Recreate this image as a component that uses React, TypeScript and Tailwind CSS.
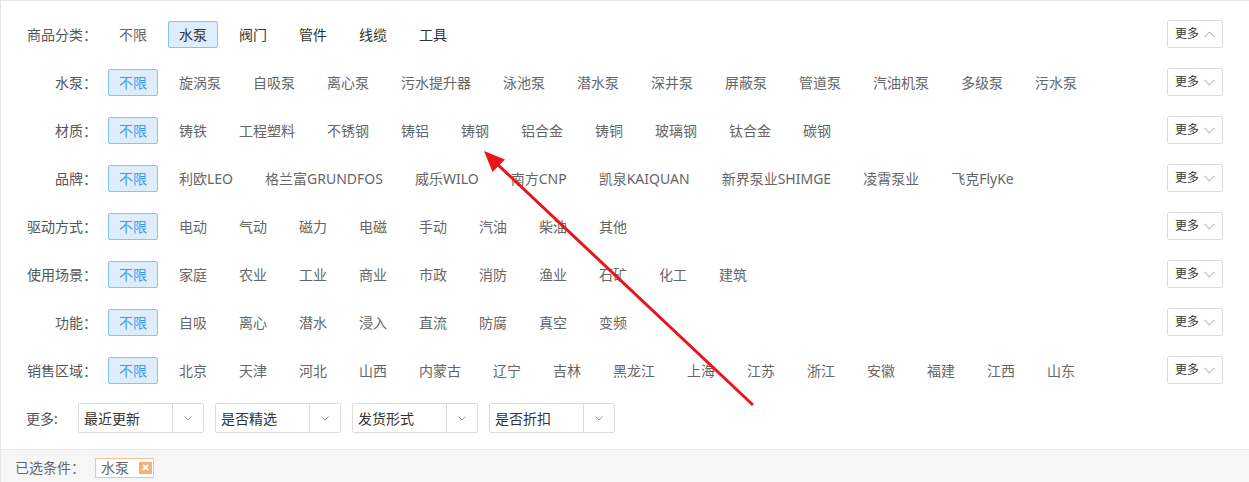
import React from 'react';

interface FilterRow {
  label: string;
  options: string[];
  selected: string;
  dark?: boolean;
  open?: boolean;
}

const rows: FilterRow[] = [
  { label: '商品分类：', options: ['不限', '水泵', '阀门', '管件', '线缆', '工具'], selected: '水泵', dark: true, open: true },
  {
    label: '水泵：',
    options: ['不限', '旋涡泵', '自吸泵', '离心泵', '污水提升器', '泳池泵', '潜水泵', '深井泵', '屏蔽泵', '管道泵', '汽油机泵', '多级泵', '污水泵'],
    selected: '不限',
  },
  {
    label: '材质：',
    options: ['不限', '铸铁', '工程塑料', '不锈钢', '铸铝', '铸钢', '铝合金', '铸铜', '玻璃钢', '钛合金', '碳钢'],
    selected: '不限',
  },
  {
    label: '品牌：',
    options: ['不限', '利欧LEO', '格兰富GRUNDFOS', '威乐WILO', '南方CNP', '凯泉KAIQUAN', '新界泵业SHIMGE', '凌霄泵业', '飞克FlyKe'],
    selected: '不限',
  },
  {
    label: '驱动方式：',
    options: ['不限', '电动', '气动', '磁力', '电磁', '手动', '汽油', '柴油', '其他'],
    selected: '不限',
  },
  {
    label: '使用场景：',
    options: ['不限', '家庭', '农业', '工业', '商业', '市政', '消防', '渔业', '石矿', '化工', '建筑'],
    selected: '不限',
  },
  {
    label: '功能：',
    options: ['不限', '自吸', '离心', '潜水', '浸入', '直流', '防腐', '真空', '变频'],
    selected: '不限',
  },
  {
    label: '销售区域：',
    options: ['不限', '北京', '天津', '河北', '山西', '内蒙古', '辽宁', '吉林', '黑龙江', '上海', '江苏', '浙江', '安徽', '福建', '江西', '山东'],
    selected: '不限',
  },
];

const selects = ['最近更新', '是否精选', '发货形式', '是否折扣'];

const font = { fontFamily: '"Noto Sans", "Noto Sans CJK SC", sans-serif' };

function Chevron({ up }: { up?: boolean }) {
  return (
    <svg width="11" height="7" viewBox="0 0 11 7" className="text-[#999]">
      <path
        d={up ? 'M0.5 6 L5.5 1 L10.5 6' : 'M0.5 1 L5.5 6 L10.5 1'}
        fill="none"
        stroke="currentColor"
        strokeWidth="1"
      />
    </svg>
  );
}

function SmallChevron() {
  return (
    <svg width="8" height="5" viewBox="0 0 8 5" className="text-[#999]">
      <path d="M0.5 0.5 L4 4 L7.5 0.5" fill="none" stroke="currentColor" strokeWidth="1" />
    </svg>
  );
}

export default function App() {
  return (
    <div className="relative w-[1249px] h-[482px] overflow-hidden bg-white" style={font}>
      <div className="border-t border-l border-[#e6e6e6] pt-[9px]">
        {/* Filter rows */}
        {rows.map((row) => (
          <div key={row.label} className="flex items-center h-[48px]">
            <span className="w-[96px] text-right text-[14px] text-[#555] whitespace-nowrap">{row.label}</span>
            <div className="flex-1 flex items-center gap-[10px] ml-[11px]">
              {row.options.map((opt) => {
                const active = opt === row.selected;
                return (
                  <span
                    key={opt}
                    className={`px-[10px] h-[27px] flex items-center text-[14px] rounded-[2px] border whitespace-nowrap ${
                      active
                        ? `bg-[#ddedfa] border-[#86c3f2] ${row.dark ? 'text-[#333]' : 'text-[#3a9cf0]'}`
                        : `border-transparent ${row.dark && opt !== '不限' ? 'text-[#333]' : 'text-[#666]'}`
                    }`}
                  >
                    {opt}
                  </span>
                );
              })}
            </div>
            <button className="mr-[26px] w-[56px] h-[28px] flex items-center justify-center gap-[5px] border border-[#dcdcdc] rounded-[2px] bg-white text-[12px] text-[#333]">
              更多
              <Chevron up={row.open} />
            </button>
          </div>
        ))}

        {/* More selects */}
        <div className="flex items-center h-[48px] pl-[25px]">
          <span className="w-[52px] text-[14px] text-[#555]">更多:</span>
          <div className="flex items-center gap-[11px]">
            {selects.map((s) => (
              <div key={s} className="flex w-[126px] h-[30px] border border-[#dcdcdc] rounded-[2px] bg-white">
                <span className="flex-1 flex items-center pl-[5px] text-[14px] text-[#333]">{s}</span>
                <span className="w-[31px] flex items-center justify-center border-l border-[#dcdcdc]">
                  <SmallChevron />
                </span>
              </div>
            ))}
          </div>
        </div>

        {/* Selected conditions */}
        <div className="mt-[7px] flex items-center h-[40px] pb-[4px] pl-[14px] bg-[#f6f6f6] border-t border-[#e8e8e8]">
          <span className="w-[80px] text-[14px] text-[#666]">已选条件：</span>
          <span className="flex items-center h-[20px] pl-[5px] pr-[1px] gap-[10px] border border-[#f8c193] bg-white text-[14px] text-[#666]">
            水泵
            <span className="w-[13px] h-[12px] flex items-center justify-center bg-[#f6b27a]">
              <svg width="7" height="7" viewBox="0 0 7 7">
                <path d="M1 1 L6 6 M6 1 L1 6" stroke="white" strokeWidth="1.8" />
              </svg>
            </span>
          </span>
        </div>
      </div>

      {/* Annotation arrow */}
      <svg className="absolute inset-0 pointer-events-none" width="1249" height="482">
        <line x1="753" y1="405" x2="496" y2="163" stroke="#e8161b" strokeWidth="3" />
        <polygon points="484,151 492.5,172 505,159.5" fill="#e8161b" />
      </svg>
    </div>
  );
}
